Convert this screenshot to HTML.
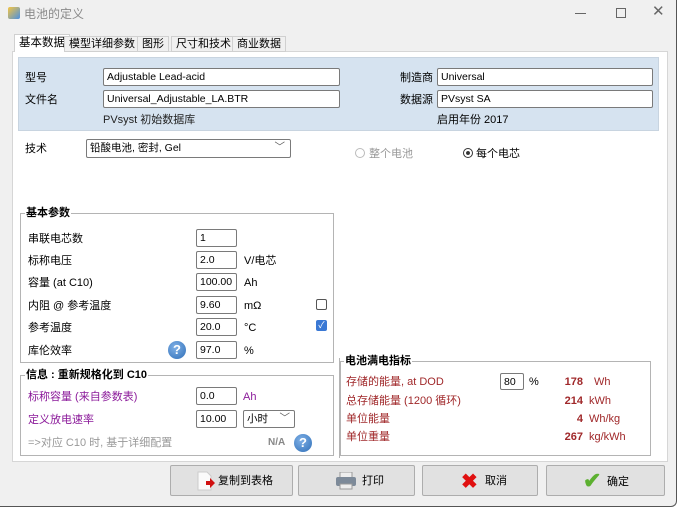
<!DOCTYPE html>
<html><head><meta charset="utf-8"><style>
*{box-sizing:border-box;margin:0;padding:0}
body{width:680px;height:510px;overflow:hidden;background:#fff;font-family:"Liberation Sans","Noto Sans CJK SC",sans-serif;font-size:11px;color:#000;position:relative}
.win{position:absolute;left:0;top:0;width:677px;height:507px;background:#f0f0f0;border-right:1px solid #555;border-bottom:1px solid #555;border-radius:0 0 6px 0}
.a{position:absolute;white-space:nowrap;line-height:16px}
.inp{position:absolute;background:#fff;border:1px solid #7a7a7a;border-radius:2px;height:18px;padding:1px 3px;font-size:10.5px;line-height:14px}
.box{position:absolute;border:1px solid #b4b4b4}
.lg{position:absolute;background:#fff;font-weight:bold;padding:0 1px;font-size:11px;line-height:13px}
.btn{position:absolute;top:465px;height:31px;background:#e1e1e1;border:1px solid #adadad;border-radius:2px;font-size:11px}
.tab{position:absolute;top:36px;height:16px;border:1px solid #d0d0d0;background:#f0f0f0;font-size:11px;padding:1px 4px;line-height:13px}
.q{position:absolute;width:18px;height:18px;border-radius:50%;background:radial-gradient(circle at 40% 35%,#7fb0e6,#2f6fb8);color:#fff;font-weight:bold;font-size:13px;text-align:center;line-height:18px}
.red{color:#a0282a}.pur{color:#8b1a9a}
</style></head><body>
<div class="win">
<div class="a" style="left:8px;top:7px;width:12px;height:12px;background:linear-gradient(135deg,#f5c542,#4a90e2);border-radius:2px"></div>
<div class="a" style="left:24px;top:6px;color:#8a8a8a;font-size:12px">电池的定义</div>
<div class="a" style="left:575px;top:13px;width:11px;height:1px;background:#666"></div>
<div class="a" style="left:616px;top:8px;width:10px;height:10px;border:1px solid #666"></div>
<div class="a" style="left:652px;top:4px;color:#666;font-size:15px">✕</div>

<div class="a" style="left:12px;top:51px;width:656px;height:411px;background:#fff;border:1px solid #d6d6d6"></div>
<div class="tab" style="left:14px;top:34px;height:18px;background:#fff;border-bottom:none;font-size:11.5px;line-height:15px">基本数据</div>
<div class="tab" style="left:64px">模型详细参数</div>
<div class="tab" style="left:137px">图形</div>
<div class="tab" style="left:171px">尺寸和技术</div>
<div class="tab" style="left:232px">商业数据</div>

<div class="a" style="left:18px;top:57px;width:641px;height:74px;background:#d6e3f0;border:1px solid #c8d4e0"></div>
<div class="a" style="left:25px;top:70px">型号</div>
<div class="a" style="left:25px;top:92px">文件名</div>
<div class="inp" style="left:103px;top:68px;width:237px">Adjustable Lead-acid</div>
<div class="inp" style="left:103px;top:90px;width:237px">Universal_Adjustable_LA.BTR</div>
<div class="a" style="left:103px;top:112px;color:#222">PVsyst 初始数据库</div>
<div class="a" style="left:400px;top:70px">制造商</div>
<div class="a" style="left:400px;top:92px">数据源</div>
<div class="inp" style="left:437px;top:68px;width:216px">Universal</div>
<div class="inp" style="left:437px;top:90px;width:216px">PVsyst SA</div>
<div class="a" style="left:437px;top:112px">启用年份 2017</div>

<div class="a" style="left:25px;top:141px">技术</div>
<div class="inp" style="left:86px;top:139px;width:205px;height:19px">铅酸电池, 密封, Gel<span style="position:absolute;right:5px;top:0;color:#555">﹀</span></div>
<div class="a" style="left:355px;top:148px;width:10px;height:10px;border:1px solid #bbb;border-radius:50%"></div>
<div class="a" style="left:369px;top:146px;color:#999">整个电池</div>
<div class="a" style="left:463px;top:148px;width:10px;height:10px;border:1px solid #333;border-radius:50%;background:radial-gradient(#333 30%,#fff 40%)"></div>
<div class="a" style="left:476px;top:146px">每个电芯</div>

<div class="box" style="left:20px;top:213px;width:314px;height:150px"></div>
<div class="lg" style="left:25px;top:207px">基本参数</div>
<div class="a" style="left:28px;top:231px">串联电芯数</div>
<div class="a" style="left:28px;top:253px">标称电压</div>
<div class="a" style="left:28px;top:275px">容量 (at C10)</div>
<div class="a" style="left:28px;top:298px">内阻 @ 参考温度</div>
<div class="a" style="left:28px;top:320px">参考温度</div>
<div class="a" style="left:28px;top:343px">库伦效率</div>
<div class="inp" style="left:196px;top:229px;width:41px">1</div>
<div class="inp" style="left:196px;top:251px;width:41px">2.0</div>
<div class="inp" style="left:196px;top:273px;width:41px">100.00</div>
<div class="inp" style="left:196px;top:296px;width:41px">9.60</div>
<div class="inp" style="left:196px;top:318px;width:41px">20.0</div>
<div class="inp" style="left:196px;top:341px;width:41px">97.0</div>
<div class="a" style="left:244px;top:253px">V/电芯</div>
<div class="a" style="left:244px;top:275px">Ah</div>
<div class="a" style="left:244px;top:298px">mΩ</div>
<div class="a" style="left:244px;top:320px">°C</div>
<div class="a" style="left:244px;top:343px">%</div>
<div class="a" style="left:316px;top:299px;width:11px;height:11px;border:1px solid #555;border-radius:2px"></div>
<div class="a" style="left:316px;top:320px;width:11px;height:11px;background:#3a78d4;border-radius:2px;color:#fff;font-size:9px;line-height:11px;text-align:center">✓</div>
<div class="q" style="left:168px;top:341px">?</div>

<div class="box" style="left:20px;top:375px;width:314px;height:81px"></div>
<div class="lg" style="left:25px;top:369px">信息 : 重新规格化到 C10</div>
<div class="a pur" style="left:28px;top:389px">标称容量 (来自参数表)</div>
<div class="a pur" style="left:28px;top:412px">定义放电速率</div>
<div class="inp" style="left:196px;top:387px;width:41px">0.0</div>
<div class="a pur" style="left:243px;top:389px">Ah</div>
<div class="inp" style="left:196px;top:410px;width:41px">10.00</div>
<div class="inp" style="left:243px;top:410px;width:52px">小时<span style="position:absolute;right:4px;top:0;color:#555">﹀</span></div>
<div class="a" style="left:28px;top:435px;color:#999">=&gt;对应 C10 时, 基于详细配置</div>
<div class="a" style="left:268px;top:435px;color:#888;font-weight:bold;font-size:10px">N/A</div>
<div class="q" style="left:294px;top:434px">?</div>

<div class="a" style="left:339px;top:358px;width:1px;height:100px;background:#b4b4b4"></div>
<div class="box" style="left:340px;top:361px;width:311px;height:95px"></div>
<div class="lg" style="left:344px;top:355px">电池满电指标</div>
<div class="a red" style="left:346px;top:374px">存储的能量, at DOD</div>
<div class="inp" style="left:500px;top:373px;width:24px;height:17px">80</div>
<div class="a" style="left:529px;top:374px">%</div>
<div class="a red" style="left:346px;top:393px">总存储能量 (1200 循环)</div>
<div class="a red" style="left:346px;top:411px">单位能量</div>
<div class="a red" style="left:346px;top:429px">单位重量</div>
<div class="a red" style="left:548px;top:374px;width:35px;text-align:right;font-weight:bold">178</div>
<div class="a red" style="left:548px;top:393px;width:35px;text-align:right;font-weight:bold">214</div>
<div class="a red" style="left:548px;top:411px;width:35px;text-align:right;font-weight:bold">4</div>
<div class="a red" style="left:548px;top:429px;width:35px;text-align:right;font-weight:bold">267</div>
<div class="a red" style="left:594px;top:374px">Wh</div>
<div class="a red" style="left:589px;top:393px">kWh</div>
<div class="a red" style="left:589px;top:411px">Wh/kg</div>
<div class="a red" style="left:589px;top:429px">kg/kWh</div>

<div class="btn" style="left:170px;width:123px"><svg class="a" style="left:25px;top:5px" width="20" height="20" viewBox="0 0 20 20"><path d="M2 1h9l4 4v14H2z" fill="#fafafa" stroke="#ccc"/><path d="M10 10h4v-3l5 5-5 5v-3h-4z" fill="#d01010"/></svg><div class="a" style="left:47px;top:7px">复制到表格</div></div>
<div class="btn" style="left:298px;width:117px"><svg class="a" style="left:36px;top:6px" width="22" height="18" viewBox="0 0 22 18"><rect x="5" y="0" width="12" height="6" fill="#eee" stroke="#999"/><rect x="1" y="5" width="20" height="9" rx="2" fill="#7d8a99"/><rect x="5" y="12" width="12" height="5" fill="#eee" stroke="#999"/></svg><div class="a" style="left:63px;top:7px">打印</div></div>
<div class="btn" style="left:422px;width:116px"><div class="a" style="left:38px;top:7px;color:#e01010;font-size:20px;font-weight:bold;line-height:18px">✖</div><div class="a" style="left:62px;top:7px">取消</div></div>
<div class="btn" style="left:546px;width:119px"><div class="a" style="left:36px;top:5px;color:#5cb030;font-size:22px;font-weight:bold;line-height:20px">✔</div><div class="a" style="left:60px;top:8px">确定</div></div>
</div>
</body></html>
